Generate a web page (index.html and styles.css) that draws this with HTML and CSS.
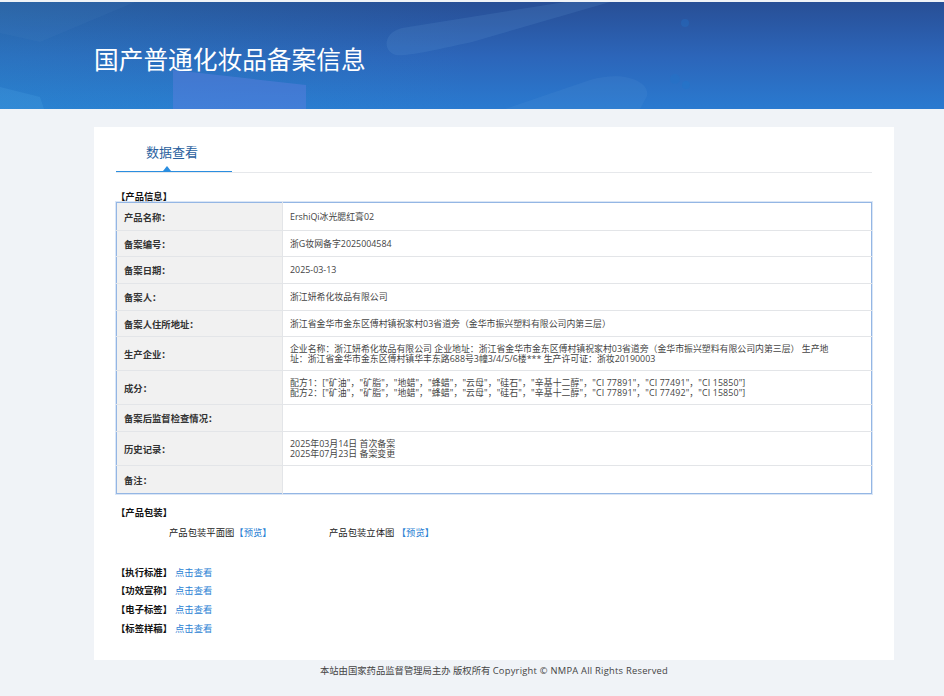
FILE: index.html
```html
<!DOCTYPE html>
<html lang="zh-CN">
<head>
<meta charset="UTF-8">
<title>国产普通化妆品备案信息</title>
<link rel="stylesheet" href="styles.css">
</head>
<body>

<div class="banner">
  <svg class="banner-art" width="944" height="107" viewBox="0 0 944 107" aria-hidden="true">
    <path d="M0 0H135L40 40L0 31Z" fill="#6a94d0" opacity=".08"/>
    <path d="M0 85L40 95L44 107H0Z" fill="#5ab0ee" opacity=".18"/>
    <path d="M610 0H565L402 26C382 31 383 50 396 53C405 55 440 47 472 40Z" fill="#6aa0dc" opacity=".16"/>
    <path d="M173 68L306 83V107H173Z" fill="#6a80e4" opacity=".38"/>
    <path d="M505 107L590 78C625 68 650 80 647 94L640 107Z" fill="#6aa8e0" opacity=".12"/>
    <circle cx="685" cy="21" r="4" fill="#2374c9" opacity=".35"/>
    <circle cx="675" cy="77" r="5" fill="#2374c9" opacity=".4"/>
    <circle cx="686" cy="83" r="4" fill="#2374c9" opacity=".6"/>
  </svg>
  <h1 class="banner-title">国产普通化妆品备案信息</h1>
</div>

<div class="main">
  <div class="tabs">
    <div class="tab">数据查看</div>
  </div>

  <div class="section-title first">【产品信息】</div>
  <table class="info-table">
    <tr class="row-a"><th>产品名称：</th><td>ErshiQi冰光腮红膏02</td></tr>
    <tr class="row-b"><th>备案编号：</th><td>浙G妆网备字2025004584</td></tr>
    <tr class="row-c"><th>备案日期：</th><td>2025-03-13</td></tr>
    <tr class="row-c"><th>备案人：</th><td>浙江妍希化妆品有限公司</td></tr>
    <tr class="row-b"><th>备案人住所地址：</th><td>浙江省金华市金东区傅村镇祝家村03省道旁（金华市振兴塑料有限公司内第三层）</td></tr>
    <tr class="row-d"><th>生产企业：</th><td>企业名称：浙江妍希化妆品有限公司 企业地址：浙江省金华市金东区傅村镇祝家村03省道旁（金华市振兴塑料有限公司内第三层） 生产地址：浙江省金华市金东区傅村镇华丰东路688号3幢3/4/5/6楼*** 生产许可证：浙妆20190003</td></tr>
    <tr class="row-d"><th>成分：</th><td class="formula">配方1：["矿油"，"矿脂"，"地蜡"，"蜂蜡"，"云母"，"硅石"，"辛基十二醇"，"CI 77891"，"CI 77491"，"CI 15850"]<br>配方2：["矿油"，"矿脂"，"地蜡"，"蜂蜡"，"云母"，"硅石"，"辛基十二醇"，"CI 77891"，"CI 77492"，"CI 15850"]</td></tr>
    <tr class="row-c"><th>备案后监督检查情况：</th><td></td></tr>
    <tr class="row-d"><th>历史记录：</th><td>2025年03月14日 首次备案<br>2025年07月23日 备案变更</td></tr>
    <tr class="row-a"><th>备注：</th><td></td></tr>
  </table>

  <div class="section-title pack-title">【产品包装】</div>
  <div class="pack-row">
    <div class="pack-item">产品包装平面图<a href="#">【<span>预览</span>】</a></div>
    <div class="pack-item">产品包装立体图 <a href="#">【<span>预览</span>】</a></div>
  </div>

  <div class="links">
    <div class="link-row"><b>【执行标准】</b><a href="#">点击查看</a></div>
    <div class="link-row"><b>【功效宣称】</b><a href="#">点击查看</a></div>
    <div class="link-row"><b>【电子标签】</b><a href="#">点击查看</a></div>
    <div class="link-row"><b>【标签样稿】</b><a href="#">点击查看</a></div>
  </div>
</div>

<div class="footer">本站由国家药品监督管理局主办 版权所有 <span class="footer-en">Copyright © NMPA All Rights Reserved</span></div>

</body>
</html>
```

FILE: styles.css
```css
body {
  margin: 0;
  font-family: 'Open Sans', 'Noto Sans CJK SC', sans-serif;
  font-size: 9.33px;
  background-color: #f0f3f7;
  color: #333;
  height: 696px;
  overflow: hidden;
}
a {
  color: #2b82d4;
  text-decoration: none;
}
.banner {
  position: relative;
  margin-top: 2px;
  height: 107px;
  background:
    linear-gradient(90deg, rgba(40, 160, 210, .22), rgba(40, 160, 210, 0) 50%),
    linear-gradient(180deg, #284f96 0%, #2c65b9 50%, #2a7ad0 100%);
  overflow: hidden;
}
.banner-art {
  position: absolute;
  top: 0;
  left: 0;
}
.banner-title {
  position: relative;
  margin: 0;
  padding: 41px 0 0 94px;
  font-size: 24.7px;
  line-height: 34px;
  font-weight: 400;
  color: #fff;
}
.main {
  width: 756px;
  height: 533px;
  margin: 18px 0 0 94px;
  padding: 0 22px;
  background-color: #fff;
}
.tabs {
  height: 45px;
  border-bottom: 1px solid #e6e8eb;
}
.tab {
  position: relative;
  width: 116px;
  height: 45px;
  padding-left: 30px;
  box-sizing: border-box;
  font-size: 13px;
  line-height: 50px;
  color: #2a5f9e;
  border-bottom: 1px solid #2b8ee0;
}
.tab::after {
  content: "";
  position: absolute;
  left: 47px;
  bottom: 0;
  border-left: 4px solid transparent;
  border-right: 4px solid transparent;
  border-bottom: 5px solid #2b8ee0;
}
.section-title {
  font-weight: 700;
  color: #111;
  line-height: 14px;
}
.first {
  margin-top: 17px;
  margin-bottom: -2px;
}
.info-table {
  width: 756px;
  box-sizing: border-box;
  border-collapse: collapse;
  border: 1px solid #94b6e4;
  box-shadow: 0 0 0 1px rgba(148, 182, 228, .35);
  table-layout: fixed;
}
.info-table th,
.info-table td {
  border-bottom: 1px solid #e3e5e8;
  padding: 0 8px 0 7px;
  line-height: 10px;
  text-align: left;
  vertical-align: middle;
}
.info-table tr:last-child th,
.info-table tr:last-child td {
  border-bottom: 0;
}
.info-table th {
  width: 150px;
  padding-top: 2px;
  background-color: #f1f1f1;
  border-right: 1px solid #e3e5e8;
  font-weight: 700;
  color: #333;
}
.info-table td {
  padding-right: 37px;
  font-size: 8.9px;
  color: #444;
}
.info-table .formula {
  letter-spacing: .12px;
}
.row-a { height: 28px; }
.row-b { height: 26px; }
.row-c { height: 27px; }
.row-d { height: 34px; }
.pack-title {
  margin-top: 12px;
}
.pack-row {
  display: flex;
  padding-left: 53px;
  margin-top: 6px;
  line-height: 14px;
  color: #222;
}
.pack-item {
  width: 160px;
}
.links {
  margin-top: 26px;
}
.link-row {
  display: flex;
  height: 19px;
  line-height: 14px;
}
.link-row:first-child {
  height: 18px;
}
.link-row b {
  width: 59px;
  color: #111;
}
.footer {
  width: 800px;
  margin-left: 94px;
  padding-top: 4px;
  text-align: center;
  line-height: 14px;
  color: #444;
}
.footer-en {
  letter-spacing: .25px;
}
```
